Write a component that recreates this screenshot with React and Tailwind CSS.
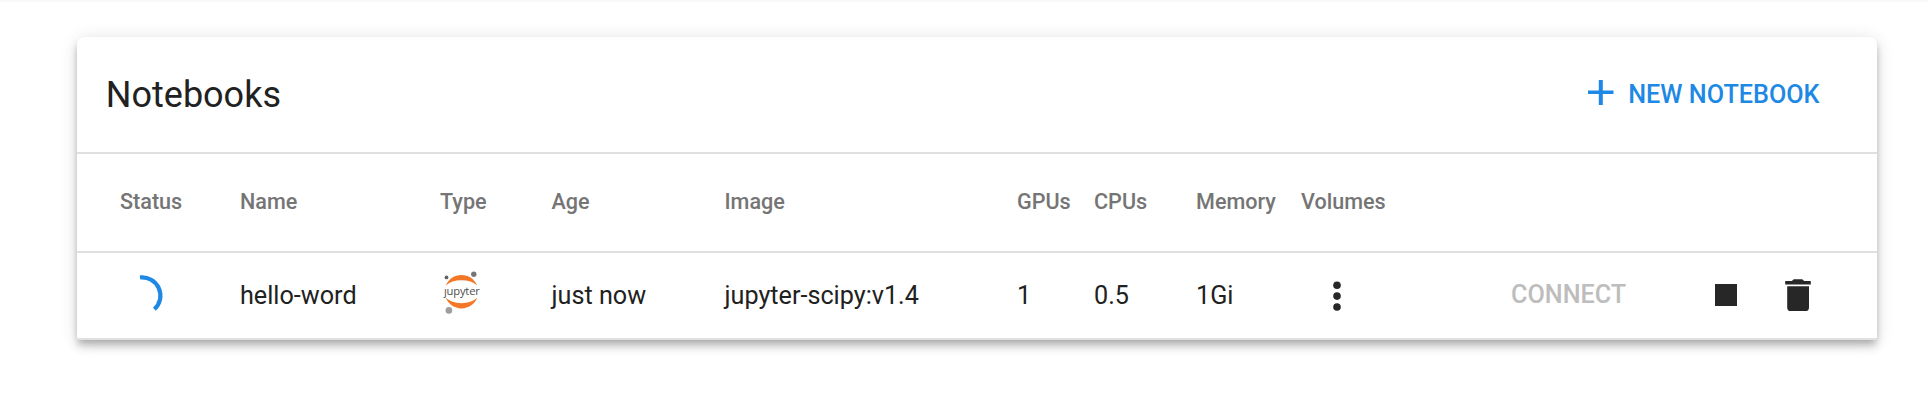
import React from "react";

const GRID =
  "grid grid-cols-[120px_200px_111.5px_173px_292.5px_77px_102px_105px_210px_204px_69px_1fr] items-center border-[#e0e0e0] pl-[43px]";

const HEADINGS = ["Status", "Name", "Type", "Age", "Image", "GPUs", "CPUs", "Memory", "Volumes"];

function Spinner() {
  return (
    <svg className="mb-px block h-[42px] w-[44px]" viewBox="120 274 44 42" fill="none">
      <path d="M140 277.4A18.4 18.4 0 0 1 154.4 309.3" stroke="#1e88e5" strokeWidth="4.2" />
    </svg>
  );
}

function JupyterLogo() {
  return (
    <svg className="mb-[5px] block h-[44px] w-[42px]" viewBox="440 271 42 44">
      <path d="M445.8 285.6C448.5 279 454.5 275 461.5 275S474.5 279 477.2 285.6C473.5 282 468 280.2 461.5 280.2S449.5 282 445.8 285.6Z" fill="#f37726" />
      <path d="M445.8 297.8C448.5 304.4 454.5 308.4 461.5 308.4S474.5 304.4 477.2 297.8C473.5 301.4 468 303.2 461.5 303.2S449.5 301.4 445.8 297.8Z" fill="#f37726" />
      <circle cx="473.8" cy="274.2" r="2.7" fill="#767677" />
      <circle cx="446.5" cy="277.4" r="1.9" fill="#616262" />
      <circle cx="448.9" cy="310.4" r="3.3" fill="#9e9e9e" />
      <text x="444" y="295" textLength="35.8" className="fill-[#4e4e4e] font-['Open_Sans',sans-serif] text-[11.2px]">ȷupyter</text>
    </svg>
  );
}

function MoreIcon() {
  return (
    <svg className="mt-px ml-[22px] block h-[32px] w-[28px]" viewBox="0 0 28 32" fill="#272727">
      <circle cx="14" cy="5.2" r="3.8" />
      <circle cx="14" cy="16.1" r="3.8" />
      <circle cx="14" cy="27" r="3.8" />
    </svg>
  );
}

function TrashIcon() {
  return (
    <svg className="mb-px block h-[34px] w-[28px]" viewBox="0 0 28 34" fill="#272727">
      <path d="M1.2 3h6.600l2-1.800h8.400l2 1.800h6.600v3.400H1.200z" />
      <path d="M3.200 8.200h21.800v21.200a3.600 3.600 0 0 1-3.600 3.600H6.800a3.600 3.600 0 0 1-3.600-3.600z" />
    </svg>
  );
}

export default function App() {
  return (
    <div className="h-[400px] border-t-2 border-[#f7faf9] bg-white px-[51px] pt-[35px] pl-[77px] font-[Roboto,sans-serif] text-[#212121]">
      <section className="w-[1800px] rounded-t-[7px] bg-white shadow-[0_4px_7px_-2px_rgba(0,0,0,0.2),0_7px_9px_0_rgba(0,0,0,0.14),0_2px_18px_0_rgba(0,0,0,0.12)]">
        <header className="flex h-[117px] items-center justify-between border-b-2 border-[#e0e0e0] pr-[57.5px] pl-[28.8px]">
          <h1 className="text-[36px] leading-[40px]">Notebooks</h1>
          <button className="flex items-center gap-[14px] text-[25.2px] leading-[30px] font-medium text-[#1e88e5]">
            <svg className="mb-[3px] block h-[26px] w-[26px]" viewBox="0 0 26 26" fill="#1e88e5">
              <path d="M10.8 0h4v10.5H25.5v3.6H14.8V25H10.8V14.1H0V10.5h10.8z" />
            </svg>
            <span>NEW NOTEBOOK</span>
          </button>
        </header>

        <div className={`${GRID} h-[99px] border-b-2 pb-[2px] text-[21.6px] leading-[26px] font-medium text-[#757575]`}>
          {HEADINGS.map((h) => (
            <div key={h}>{h}</div>
          ))}
        </div>

        <div className={`${GRID} h-[87px] border-b-2 text-[25.2px] leading-[30px]`}>
          <Spinner />
          <div>hello-word</div>
          <JupyterLogo />
          <div>just now</div>
          <div>jupyter-scipy:v1.4</div>
          <div>1</div>
          <div>0.5</div>
          <div>1Gi</div>
          <MoreIcon />
          <button className="mb-[2px] text-left text-[25.2px] font-medium text-[#bdbdbd]">CONNECT</button>
          <div className="mb-px h-[22px] w-[22px] bg-[#272727]" />
          <TrashIcon />
        </div>
      </section>
    </div>
  );
}
